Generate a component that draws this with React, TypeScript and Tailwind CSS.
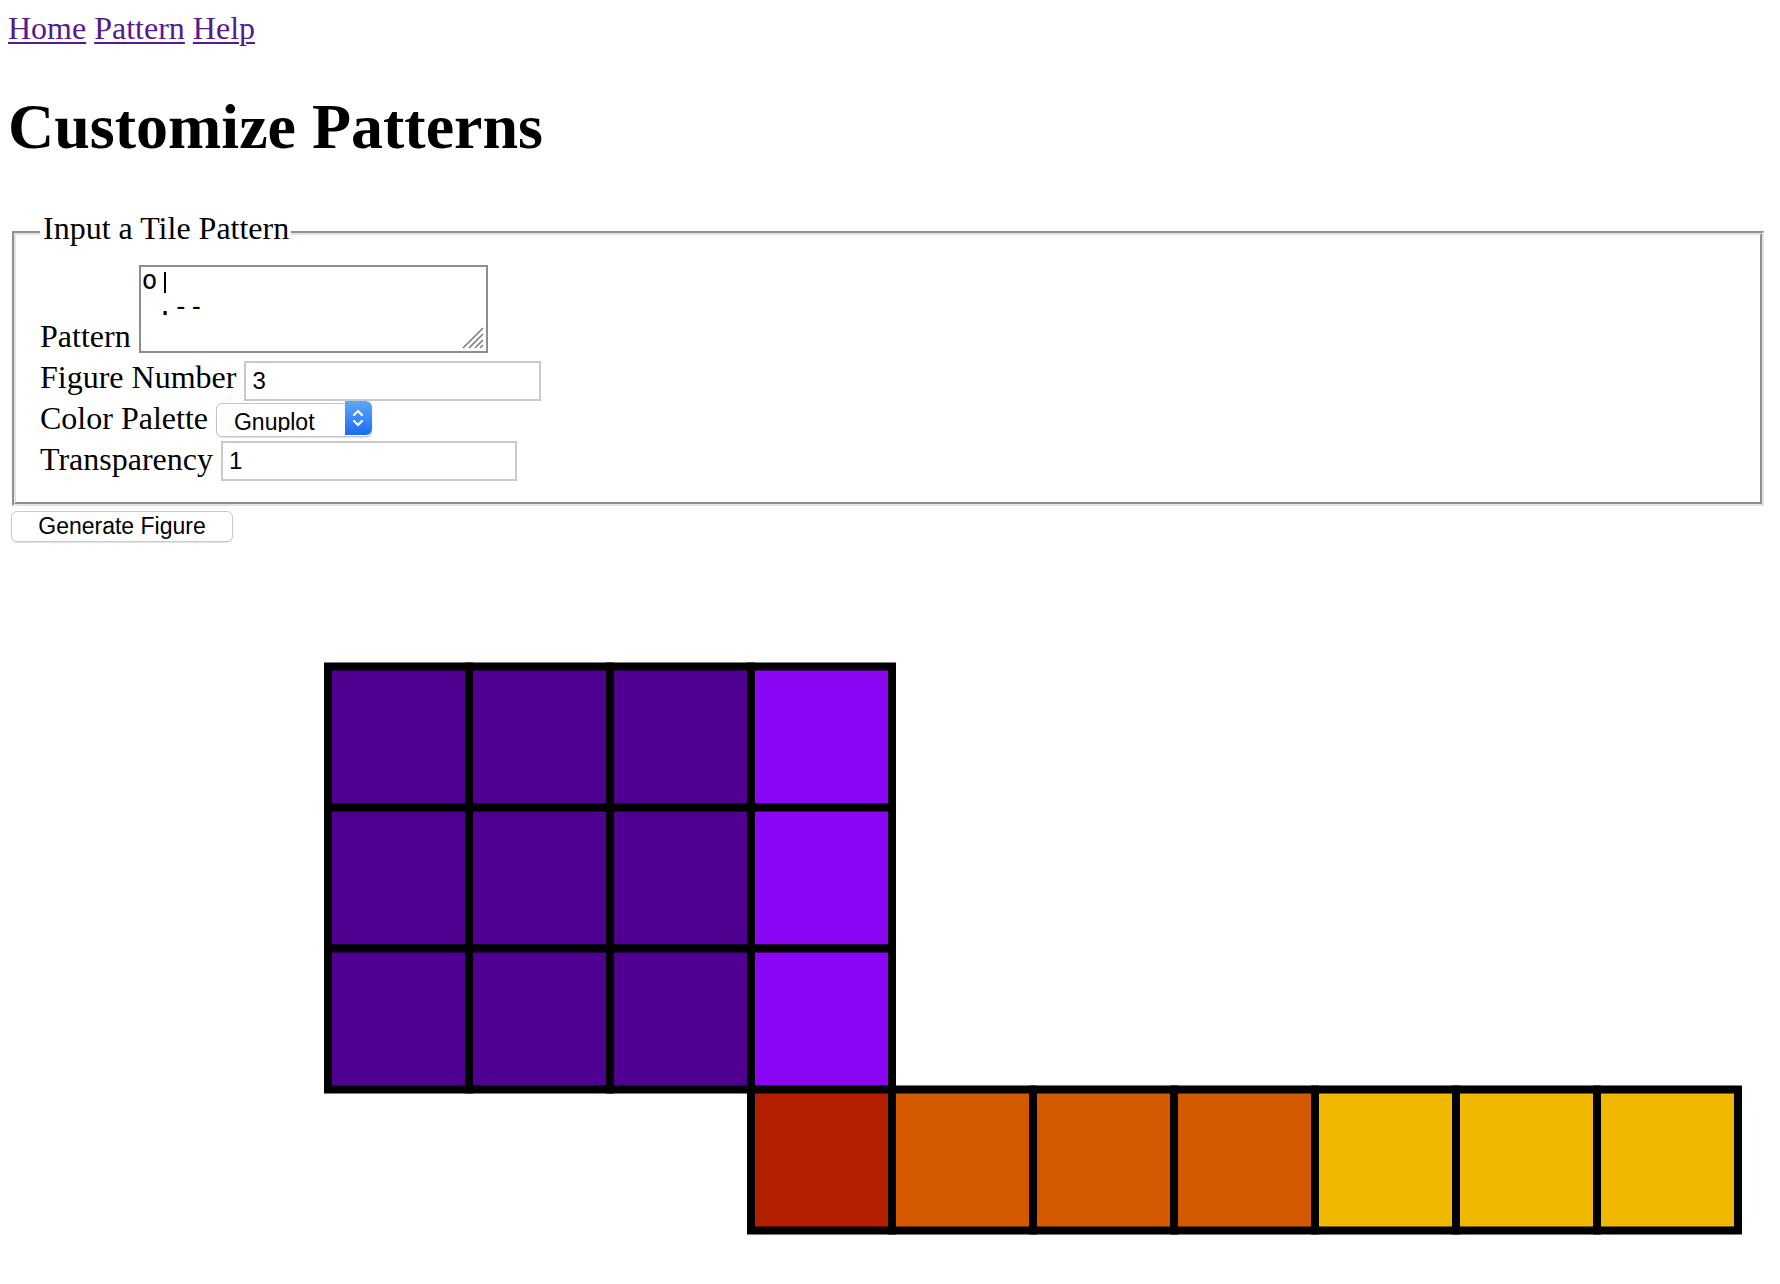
import React from 'react';

type Tile = { c: number; r: number; fill: string };

const DARK = '#4f0090';
const VIOLET = '#8b06f4';
const RED = '#b41f00';
const ORANGE = '#d55900';
const YELLOW = '#f0b800';

const PITCH = 141;
const X0 = 320;
const Y0 = 106.5;

const tiles: Tile[] = [];
for (let r = 0; r < 3; r++) {
  for (let c = 0; c < 3; c++) tiles.push({ c, r, fill: DARK });
  tiles.push({ c: 3, r, fill: VIOLET });
}
tiles.push({ c: 3, r: 3, fill: RED });
for (let c = 4; c < 7; c++) tiles.push({ c, r: 3, fill: ORANGE });
for (let c = 7; c < 10; c++) tiles.push({ c, r: 3, fill: YELLOW });

function Figure() {
  return (
    <svg className="block mt-[18px]" width={1764} height={700}>
      {tiles.map((t, i) => (
        <rect
          key={i}
          x={X0 + t.c * PITCH}
          y={Y0 + t.r * PITCH}
          width={PITCH}
          height={PITCH}
          fill={t.fill}
          stroke="#000"
          strokeWidth={8}
        />
      ))}
    </svg>
  );
}

function PaletteSelect() {
  return (
    <div className="relative mt-[0px] h-[34px] w-[156px]">
      <select
        defaultValue="gnuplot"
        className="h-full w-full appearance-none rounded-[6px] border border-[#c4c4c4] bg-white pb-[4px] pl-[17px] font-['Liberation_Sans',sans-serif] text-[23px] text-black shadow-[0_1px_1px_rgba(0,0,0,0.12)] outline-none"
      >
        <option value="gnuplot">Gnuplot</option>
        <option value="viridis">Viridis</option>
        <option value="plasma">Plasma</option>
      </select>
      <div className="pointer-events-none absolute right-0 top-0 flex h-full w-[27px] items-center justify-center rounded-r-[6px] bg-gradient-to-b from-[#5ea6fc] to-[#1a6cf2]">
        <svg width="14" height="24" viewBox="0 0 14 24" fill="none" stroke="#fff" strokeWidth="2.2" strokeLinecap="round" strokeLinejoin="round">
          <path d="M3 9 L7 5 L11 9" />
          <path d="M3 15 L7 19 L11 15" />
        </svg>
      </div>
    </div>
  );
}

export default function App() {
  return (
    <div className="min-h-screen bg-white pl-2 pr-2 pt-[10px] font-['Liberation_Serif',serif] text-[32px] leading-[37px] text-black">
      <nav>
        <a href="#" className="text-[#551a8b] underline decoration-2 underline-offset-[3px]">Home</a>{' '}
        <a href="#" className="text-[#551a8b] underline decoration-2 underline-offset-[3px]">Pattern</a>{' '}
        <a href="#" className="text-[#551a8b] underline decoration-2 underline-offset-[3px]">Help</a>
      </nav>

      <h1 className="mt-[43px] text-[64px] font-bold leading-[74px]">Customize Patterns</h1>

      <fieldset className="ml-[4px] mr-[8px] mt-[46px] border-4 border-[#e3e3e3] pb-[21px] pl-[24px] pr-4 pt-[9px] [border-style:groove]">
        <legend className="pb-[9px] pl-[3px] pr-[2px] leading-[37px]">Input a Tile Pattern</legend>

        <div className="flex items-end gap-2">
          <span className="mb-[-2px]">Pattern</span>
          <div className="relative">
            <textarea
              defaultValue={'o\n .--'}
              className="block h-[88px] w-[349px] resize-none border-2 border-[#8d8d8d] px-[1px] pt-0 font-['DejaVu_Sans_Mono',monospace] text-[26px] leading-[26px] text-black outline-none"
            />
            <span className="absolute left-[25px] top-[7px] h-[21px] w-[2px] bg-black" />
            <svg className="pointer-events-none absolute bottom-[4px] right-[4px]" width="24" height="24" viewBox="0 0 24 24" stroke="#7a7a7a" strokeWidth="1.6">
              <path d="M23 3 L3 23" />
              <path d="M23 9 L9 23" />
              <path d="M23 15 L15 23" />
              <path d="M23 20 L20 23" />
            </svg>
          </div>
        </div>

        <div className="flex items-start gap-2">
          <span className="mt-[6px]">Figure Number</span>
          <input
            defaultValue="3"
            className="mt-[8px] h-[40px] w-[297px] border-2 border-[#c9c9c9] px-[6px] font-['Liberation_Sans',sans-serif] text-[24px] text-black outline-none"
          />
        </div>

        <div className="flex items-start gap-2">
          <span className="mt-[-1px]">Color Palette</span>
          <PaletteSelect />
        </div>

        <div className="flex items-start gap-2">
          <span className="mt-[4px]">Transparency</span>
          <input
            defaultValue="1"
            className="mt-[4px] h-[40px] w-[296px] border-2 border-[#c9c9c9] px-[6px] font-['Liberation_Sans',sans-serif] text-[24px] text-black outline-none"
          />
        </div>
      </fieldset>

      <button
        type="button"
        className="ml-[3px] mt-[5px] block h-[31px] w-[222px] rounded-[6px] border border-[#c9c9c9] bg-white font-['Liberation_Sans',sans-serif] text-[23px] leading-none text-black shadow-[0_1px_1px_rgba(0,0,0,0.12)]"
      >
        Generate Figure
      </button>

      <Figure />
    </div>
  );
}
